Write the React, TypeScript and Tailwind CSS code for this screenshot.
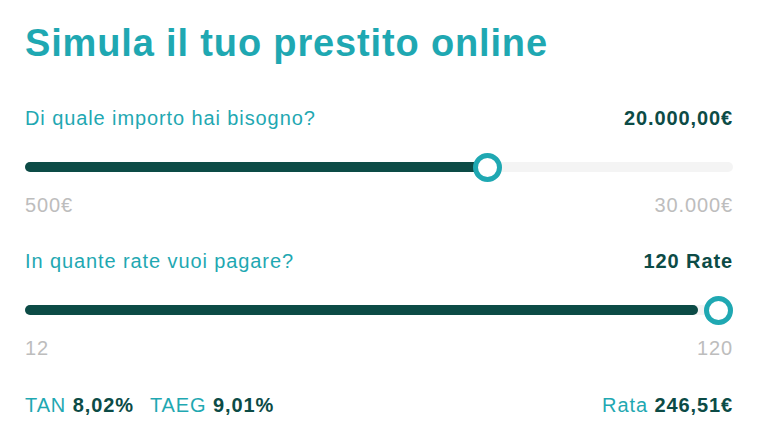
const TEAL = "text-[#1fa8b2]";

function Slider({ thumbLeft, fill }: { thumbLeft: number; fill: number }) {
  return (
    <div className="relative h-[28px]">
      <div className="absolute left-0 right-0 top-[9px] h-[10px] rounded-full bg-[#f4f4f4]" />
      <div className="absolute left-0 top-[9px] h-[10px] rounded-full bg-[#0c4b46]" style={{ width: fill }} />
      <div
        className="absolute top-0 w-[29px] h-[29px] rounded-full border-[5px] border-[#1fa8b2] bg-white"
        style={{ left: thumbLeft }}
      />
    </div>
  );
}

export default function App() {
  return (
    <div className="w-[771px] h-[448px] bg-white pl-[25px] pr-[38px] font-['Liberation_Sans',Arial,sans-serif] text-[20px] tracking-[0.9px]">
      <h1 className={`pt-[21px] h-[65px] flex items-center text-[38px] tracking-[0.85px] font-bold ${TEAL} leading-none`}>
        Simula il tuo prestito online
      </h1>

      <div className="mt-[41px] h-[24px] flex items-center justify-between">
        <span className={TEAL}>Di quale importo hai bisogno?</span>
        <span className="font-bold text-[#0c4b46]">20.000,00€</span>
      </div>
      <div className="mt-[23px]">
        <Slider thumbLeft={448} fill={462} />
      </div>
      <div className="mt-[12px] h-[24px] flex items-center justify-between text-[#bdbdbd]">
        <span>500€</span>
        <span>30.000€</span>
      </div>

      <div className="mt-[32px] h-[24px] flex items-center justify-between">
        <span className={TEAL}>In quante rate vuoi pagare?</span>
        <span className="font-bold text-[#0c4b46]">120 Rate</span>
      </div>
      <div className="mt-[23px]">
        <Slider thumbLeft={679} fill={673} />
      </div>
      <div className="mt-[12px] h-[24px] flex items-center justify-between text-[#bdbdbd]">
        <span>12</span>
        <span>120</span>
      </div>

      <div className="mt-[33px] h-[24px] flex items-center justify-between">
        <div>
          <span className={TEAL}>TAN </span>
          <span className="font-bold text-[#0c4b46]">8,02%</span>
          <span className={`${TEAL} ml-[16px]`}>TAEG </span>
          <span className="font-bold text-[#0c4b46]">9,01%</span>
        </div>
        <div>
          <span className={TEAL}>Rata </span>
          <span className="font-bold text-[#0c4b46]">246,51€</span>
        </div>
      </div>
    </div>
  );
}
